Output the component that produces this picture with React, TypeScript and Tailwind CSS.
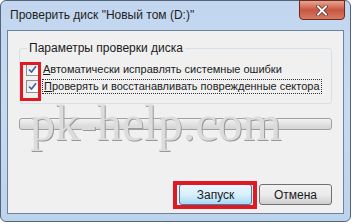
import React from 'react';

const Check = () => (
  <div className="w-[13px] h-[13px] border border-[#8f8f8f] bg-gradient-to-br from-[#e6e6e6] to-white flex items-center justify-center shrink-0">
    <svg width="9" height="9" viewBox="0 0 9 9">
      <path d="M1 4.5 L3.5 7 L8 1.2" fill="none" stroke="#3d5fa0" strokeWidth="1.6" />
    </svg>
  </div>
);

export default function App() {
  return (
    <div className="relative w-[353px] h-[224px] bg-white font-['Liberation_Sans',Arial,sans-serif] text-[12px] text-[#1b1b1b] overflow-hidden">
      {/* window frame */}
      <div className="w-[351px] h-[222px] rounded-t-[6px] rounded-b-[6px] border border-[#54657a] bg-gradient-to-b from-[#c2d7ef] via-[#c6dbf2] to-[#bcd3ec] flex flex-col px-[6px] pb-[7px]">
        {/* title bar */}
        <div className="h-[29px] flex items-start shrink-0">
          <span className="pl-[3px] pt-[8px] text-[12px] text-[#1e1e1e] leading-none">Проверить диск "Новый том (D:)"</span>
          <div className="ml-auto mr-[-1px] mt-[-1px] w-[46px] h-[20px] rounded-b-[4px] border border-[#6b2a22] bg-gradient-to-b from-[#e8a493] via-[#c8553f] to-[#d47b62] flex items-center justify-center">
            <svg width="12" height="11" viewBox="0 0 12 11">
              <path d="M2 1.5 L10 9.5 M10 1.5 L2 9.5" stroke="#4a1a14" strokeWidth="3.2" strokeLinecap="square" />
              <path d="M2 1.5 L10 9.5 M10 1.5 L2 9.5" stroke="white" strokeWidth="2" strokeLinecap="square" />
            </svg>
          </div>
        </div>

        {/* client area */}
        <div className="flex-1 border border-[#6e8299] bg-[#f0f0f0] flex flex-col px-[11px]">
          <fieldset className="mt-[10px] border border-[#d5dfe5] rounded-[3px] h-[63px] px-[5px]">
            <legend className="ml-[2px] px-[2px] leading-[14px]">Параметры проверки диска</legend>
            <div className="flex flex-col gap-[4px] mt-[8px] text-[11px] whitespace-nowrap">
              <div className="flex items-center gap-[4px] h-[13px] pl-[1px]">
                <Check />
                <span className="leading-[13px]">
                  <span className="underline">А</span>втоматически исправлять системные ошибки
                </span>
              </div>
              <div className="flex items-center gap-[4px] h-[13px] pl-[1px]">
                <Check />
                <span className="leading-[13px] outline-1 outline-dotted outline-[#333] px-[1px]">
                  <span className="underline">П</span>роверять и восстанавливать поврежденные сектора
                </span>
              </div>
            </div>
          </fieldset>

          <div className="mt-[14px] h-[12px] rounded-[3px] border border-[#a0a0a0] bg-gradient-to-b from-[#f3f3f3] via-[#e2e2e2] to-[#d4d4d4]" />

          <div className="mt-auto mb-[8px] flex justify-end gap-[7px]">
            <button className="w-[73px] h-[21px] rounded-[3px] border border-[#3c7fb1] bg-gradient-to-b from-[#eaf6fd] via-[#d9f0fc] to-[#a7d9f5] text-[12px] leading-none">Запуск</button>
            <button className="w-[73px] h-[21px] rounded-[3px] border border-[#707070] bg-gradient-to-b from-[#f2f2f2] via-[#ebebeb] to-[#cfcfcf] text-[12px] leading-none">Отмена</button>
          </div>
        </div>
      </div>

      {/* watermark */}
      <div className="absolute left-[30px] top-[98px] font-['Liberation_Serif',serif] text-[50px] leading-none text-[#dcdcdc] [text-shadow:1px_1px_0_#999999] pointer-events-none">pk-help.com</div>

      {/* red highlights */}
      <div className="absolute left-[20px] top-[62px] w-[21px] h-[39px] border-[3px] border-[#e01a22]" />
      <div className="absolute left-[173px] top-[181px] w-[84px] h-[28px] border-[4px] border-[#e01a22]" />
    </div>
  );
}
